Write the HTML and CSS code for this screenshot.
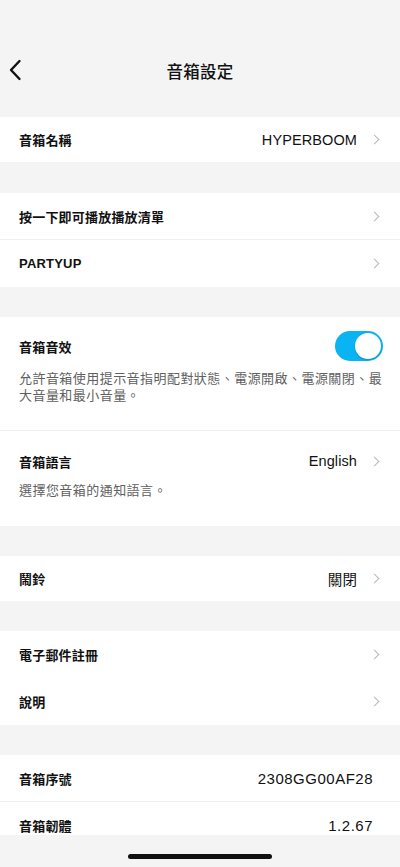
FILE: index.html
```html
<!DOCTYPE html>
<html lang="zh-Hant">
<head>
    <meta charset="UTF-8">
    <meta name="viewport" content="width=device-width, initial-scale=1.0">
    <title>音箱設定</title>
    <link rel="stylesheet" href="styles.css">
</head>
<body>
    <div class="screen">
        <div class="scroll">
            <header class="nav">
                <a class="back" href="#">
                    <svg width="14" height="22" viewBox="0 0 14 22"><path d="M11.5 2 L3 11 L11.5 20" fill="none" stroke="#111" stroke-width="2.4" stroke-linecap="round" stroke-linejoin="round"/></svg>
                </a>
                <h1>音箱設定</h1>
            </header>

            <section class="group">
                <div class="row row-name">
                    <span class="label">音箱名稱</span>
                    <span class="value">HYPERBOOM</span>
                    <span class="chev"></span>
                </div>
            </section>

            <section class="group">
                <div class="row row-tall line">
                    <span class="label">按一下即可播放播放清單</span>
                    <span class="chev"></span>
                </div>
                <div class="row row-tall">
                    <span class="label">PARTYUP</span>
                    <span class="chev"></span>
                </div>
            </section>

            <section class="group">
                <div class="block block-sound line">
                    <div class="block-head">
                        <span class="label">音箱音效</span>
                        <span class="toggle on"><span class="knob"></span></span>
                    </div>
                    <p class="desc">允許音箱使用提示音指明配對狀態、電源開啟、電源關閉、最大音量和最小音量。</p>
                </div>
                <div class="block block-lang">
                    <div class="block-head">
                        <span class="label">音箱語言</span>
                        <span class="value">English</span>
                        <span class="chev"></span>
                    </div>
                    <p class="desc">選擇您音箱的通知語言。</p>
                </div>
            </section>

            <section class="group">
                <div class="row row-name">
                    <span class="label">鬧鈴</span>
                    <span class="value">關閉</span>
                    <span class="chev"></span>
                </div>
            </section>

            <section class="group">
                <div class="row row-tall">
                    <span class="label">電子郵件註冊</span>
                    <span class="chev"></span>
                </div>
                <div class="row row-tall">
                    <span class="label">說明</span>
                    <span class="chev"></span>
                </div>
            </section>

            <section class="group">
                <div class="row row-tall line plain">
                    <span class="label">音箱序號</span>
                    <span class="value">2308GG00AF28</span>
                </div>
                <div class="row row-tall plain">
                    <span class="label">音箱韌體</span>
                    <span class="value">1.2.67</span>
                </div>
            </section>
        </div>
        <div class="home-bar"><span class="indicator"></span></div>
    </div>
</body>
</html>
```

FILE: styles.css
```css
:root {
    --bg: #f4f4f4;
    --card: #ffffff;
    --text: #111111;
    --muted: #5f5f5f;
    --chev: #b8b8b8;
    --line: #f0f0f0;
    --accent: #0ab4f3;
}

* {
    box-sizing: border-box;
}

body {
    margin: 0;
    background: var(--bg);
    font-family: "Liberation Sans", "Noto Sans CJK TC", sans-serif;
    color: var(--text);
}

.screen {
    width: 400px;
    height: 867px;
    display: flex;
    flex-direction: column;
}

.scroll {
    flex: 1;
    overflow: hidden;
}

.nav {
    height: 117px;
    padding-top: 60px;
    position: relative;
}

.nav h1 {
    margin: 0;
    text-align: center;
    font-size: 16.5px;
    line-height: 24px;
    font-weight: 500;
    letter-spacing: 0.3px;
}

.back {
    position: absolute;
    left: 8px;
    top: 59px;
    display: block;
}

.group {
    background: var(--card);
    margin-bottom: 30px;
}

.group:first-of-type {
    margin-bottom: 31px;
}

.row {
    display: flex;
    align-items: center;
    padding: 0 20px 0 19px;
}

.row-name {
    height: 45px;
}

.row-tall {
    height: 47px;
}

.line {
    border-bottom: 1px solid var(--line);
}

.plain {
    padding-right: 27px;
}

.label {
    flex: 1;
    font-size: 13px;
    font-weight: 700;
    letter-spacing: 0.2px;
}

.value {
    font-size: 14.5px;
    letter-spacing: 0.1px;
}

.plain .value {
    font-size: 15px;
    letter-spacing: 0.5px;
}

.chev {
    width: 7px;
    height: 7px;
    border-top: 1.5px solid var(--chev);
    border-right: 1.5px solid var(--chev);
    transform: rotate(45deg);
    margin-left: 14px;
    margin-right: 2px;
}

.block {
    padding: 0 20px 0 19px;
}

.block-head {
    display: flex;
    align-items: center;
    height: 30px;
}

.block-sound {
    padding-top: 14px;
    padding-bottom: 26px;
    padding-right: 17px;
}

.block-lang {
    padding-top: 15px;
    padding-bottom: 27px;
}

.desc {
    margin: 0;
    font-size: 13px;
    line-height: 17px;
    color: var(--muted);
    letter-spacing: 0.45px;
}

.block-sound .desc {
    margin-top: 9px;
}

.block-lang .desc {
    margin-top: 6px;
}

.toggle {
    width: 48px;
    height: 30px;
    border-radius: 15px;
    background: var(--accent);
    display: flex;
    align-items: center;
    justify-content: flex-end;
    padding: 2px;
}

.knob {
    width: 26px;
    height: 26px;
    border-radius: 50%;
    background: #fff;
    box-shadow: 0 1px 2px rgba(0, 0, 0, 0.2);
}

.home-bar {
    height: 32px;
    display: flex;
    justify-content: center;
    padding-top: 19px;
}

.indicator {
    width: 144px;
    height: 5px;
    border-radius: 3px;
    background: #111;
}
```
